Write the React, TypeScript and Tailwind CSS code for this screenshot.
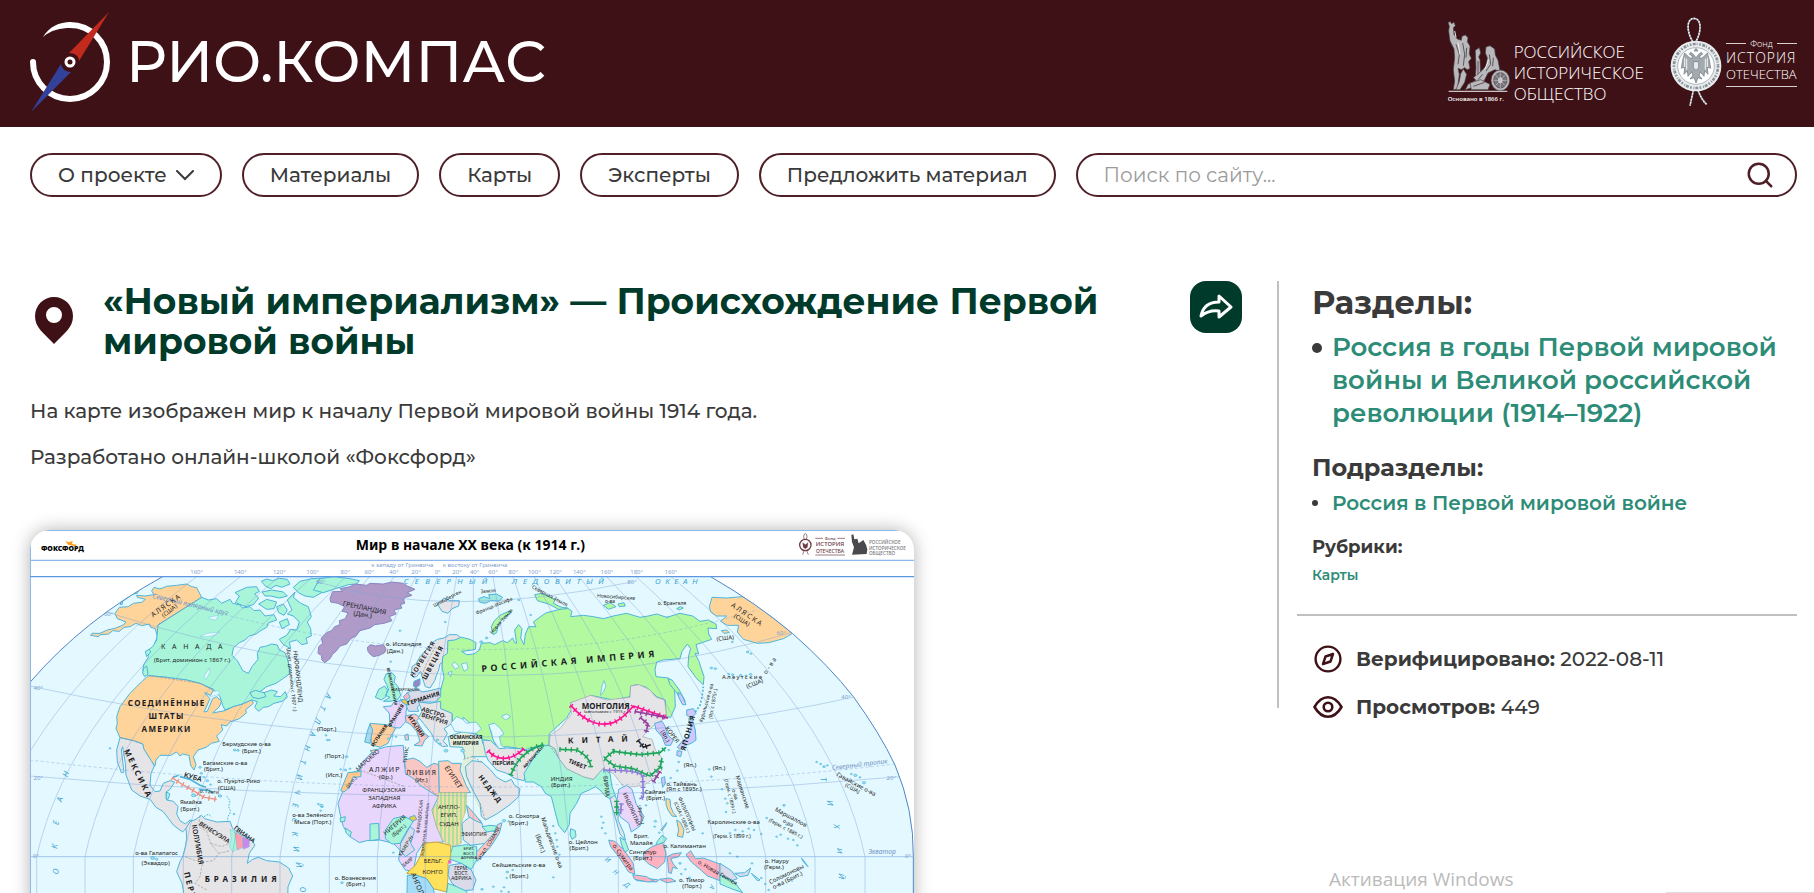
import React from 'react';
import { Search } from 'lucide-react';

// [x, y, text, size, rotation, weight, letter spacing]
type Label = [number, number, string, number?, number?, number?, number?];

const WATER = '#e3f9ff';
const COAST = '#4fb4dc';
const GRAY = '#e5e5e8';
const ORANGE = '#ffd59a';
const MINT = '#a8f5d9';
const LILAC = '#e8d6fc';
const ROSE = '#ffb3c0';

// Top edge and equator positions of every meridian.
const MERIDIANS = [
  [590, -40], [721, 110], [838, 255], [938, 400], [1037, 550], [1108, 695], [1182, 840], [1248, 988], [1313, 1132], [1370, 1276],
  [1420, 1420], [1479, 1565], [1539, 1710], [1602, 1855], [1665, 2000], [1737, 2150], [1820, 2297], [1908, 2445], [2013, 2595],
];

const westLabels: Label[] = [
  [502, 292, 'АЛЯСКА', 21, -35, 400, 4],
  [512, 307, '(США)', 18, -38],
  [585, 418, 'КАНАДА', 21, 0, 400, 20],
  [576, 455, '(Брит. доминион с 1867 г.)', 18],
  [500, 587, 'СОЕДИНЁННЫЕ', 24, 0, 700, 4],
  [500, 627, 'ШТАТЫ', 24, 0, 700, 4],
  [500, 667, 'АМЕРИКИ', 24, 0, 700, 4],
  [407, 795, 'МЕКСИКА', 24, 64, 700, 6],
  [888, 500, 'НЬЮФАУНДЛЕНД', 18, 84],
  [870, 510, '(Брит. доминион с 1907 г.)', 15, 84],
  [740, 709, 'Бермудские о-ва', 18],
  [754, 728, '(Брит.)', 18],
  [675, 764, 'Багамские о-ва', 18],
  [640, 783, '(Брит.)', 18],
  [577, 808, 'КУБА', 21, 16, 600],
  [716, 820, 'о. Пуэрто-Рико', 18],
  [680, 840, '(США)', 18],
  [628, 850, 'о. Гаити', 15, 4],
  [573, 883, 'Ямайка', 18],
  [570, 902, '(Брит.)', 18],
  [586, 1005, 'КОЛУМБИЯ', 21, 80, 600],
  [640, 972, 'ВЕНЕСУЭЛА', 18, 32, 600],
  [730, 978, 'ГВИАНА', 18, 36, 600],
  [728, 1115, 'БРАЗИЛИЯ', 24, 0, 700, 12],
  [562, 1130, 'ПЕРУ', 24, 75, 700, 6],
  [470, 1035, 'о-ва Галапагос', 18],
  [467, 1065, '(Эквадор)', 18],
  [938, 921, 'о-ва Зелёного', 18],
  [938, 941, 'Мыса (Порт.)', 18],
];

const middleLabels: Label[] = [
  [132, 300, 'ГРЕНЛАНДИЯ', 20, 12],
  [127, 320, '(Дан.)', 20, 8],
  [251, 409, 'о. Исландия', 18],
  [225, 429, '(Дан.)', 18],
  [384, 270, 'Шпицберген', 15, -28],
  [505, 248, 'Земля', 15, -4],
  [524, 292, 'Франца-Иосифа', 15, -22],
  [687, 262, 'Северная Земля', 15, 28],
  [548, 337, 'Новая Земля', 15, -48],
  [888, 266, 'Новосибирские', 15, 4],
  [870, 280, 'о-ва', 15],
  [750, 463, 'РОССИЙСКАЯ ИМПЕРИЯ', 27, -5, 700, 11],
  [314, 450, 'НОРВЕГИЯ', 19, -58, 600, 3],
  [345, 460, 'ШВЕЦИЯ', 20, -62, 700, 4],
  [212, 530, 'ВЕЛИКОБРИТАНИЯ', 12, 78, 600],
  [256, 543, 'НИДЕРЛАНДЫ', 12],
  [312, 571, 'ГЕРМАНИЯ', 18, -18, 700],
  [232, 620, 'ФРАНЦИЯ', 15, -58, 700],
  [283, 652, 'ИТАЛИЯ', 18, 56, 600],
  [182, 680, 'ИСПАНИЯ', 15, -56, 700],
  [340, 614, 'АВСТРО-', 18, 18, 600],
  [342, 632, 'ВЕНГРИЯ', 18, 18, 600],
  [438, 688, 'ОСМАНСКАЯ', 15, 0, 700],
  [437, 705, 'ИМПЕРИЯ', 15, 0, 700],
  [20, 664, '(Порт.)', 18],
  [43, 744, '(Порт.)', 18],
  [42, 802, '(Исп.)', 18],
  [147, 755, 'МАРОККО', 18, -42],
  [98, 820, '(Исп.)', 15, -50],
  [195, 787, 'АЛЖИР', 21, 0, 400, 4],
  [197, 808, '(Фр.)', 18],
  [263, 735, 'ТУНИС', 15, -82],
  [305, 796, 'ЛИВИЯ', 21, 0, 400, 4],
  [304, 816, '(Ит.)', 18],
  [394, 805, 'ЕГИПЕТ', 21, 56, 400],
  [192, 846, 'ФРАНЦУЗСКАЯ', 18],
  [193, 869, 'ЗАПАДНАЯ', 18],
  [193, 893, 'АФРИКА', 18],
  [387, 898, 'АНГЛО-', 18],
  [387, 922, 'ЕГИП.', 18],
  [387, 947, 'СУДАН', 18],
  [228, 950, 'НИГЕРИЯ', 18, -40],
  [240, 966, '(Брит.)', 16, -40],
  [304, 920, 'ФРАНЦУЗСКАЯ', 14, -84],
  [320, 960, 'ЭКВАТОРИАЛЬНАЯ АФРИКА', 12, -84],
  [262, 1010, 'КАМЕРУН', 15, -58],
  [266, 1060, 'ЗАИР', 15, -40],
  [462, 978, 'ЭФИОПИЯ', 15],
  [512, 1003, 'ИТАЛ. СОМАЛИ', 15, -58],
  [340, 1059, 'БЕЛЬГ.', 18],
  [338, 1091, 'КОНГО', 18],
  [447, 1020, 'БРИТ.', 12, 0, 400],
  [447, 1034, 'ВОСТ.', 12, 0, 400],
  [447, 1048, 'АФРИКА', 12, 0, 400],
  [424, 1080, 'ГЕРМ.', 15],
  [424, 1095, 'ВОСТ.', 15],
  [424, 1111, 'АФРИКА', 15],
  [288, 1130, 'АНГОЛА', 21, 68],
  [505, 842, 'НЕДЖД', 21, 52, 700, 4],
  [549, 765, 'ПЕРСИЯ', 16, 0, 700],
  [642, 745, 'АФГАНИСТАН', 12, -48, 700],
  [725, 812, 'ИНДИЯ', 18],
  [722, 831, '(Брит.)', 18],
  [770, 768, 'ТИБЕТ', 18, 22, 700],
  [857, 598, 'МОНГОЛИЯ', 24, 0, 700],
  [858, 610, '(автономия с 1915 г.)', 13],
  [846, 697, 'КИТАЙ', 24, -2, 700, 24],
  [853, 830, 'БИРМА', 18, 84],
  [930, 900, 'ИНДОКИТАЙ', 17, 66],
  [959, 915, '(Франц.)', 14, 78],
  [612, 925, 'о. Сокотра', 18],
  [596, 944, '(Брит.)', 18],
  [690, 1000, 'Мальдивские о-ва', 18, 70],
  [656, 1002, '(Брит.)', 18, 72],
  [790, 1002, 'о. Цейлон', 18],
  [777, 1020, '(Брит.)', 18],
  [596, 1070, 'Сейшельские о-ва', 18],
  [597, 1104, '(Брит.)', 18],
  [106, 1109, 'о. Вознесения', 18],
  [107, 1128, '(Брит.)', 18],
  [904, 1045, 'о. Суматра', 18, 54],
];

const eastLabels: Label[] = [
  [156, 284, 'о. Врангеля', 15],
  [378, 320, 'АЛЯСКА', 21, 34, 400, 5],
  [362, 335, '(США)', 18, 34],
  [316, 390, '(США)', 18, -6],
  [368, 508, 'Алеутские', 18, 0, 400, 4],
  [456, 468, 'о-ва', 18, -56, 400, 6],
  [406, 526, '(США)', 18, -22],
  [264, 580, 'Курильские о-ва', 15, -74],
  [284, 582, '(Яп. с 1875г.)', 15, -80],
  [211, 670, 'ЯПОНИЯ', 21, -74, 700, 3],
  [152, 678, 'КОРЕЯ', 18, 54],
  [130, 682, '(Яп.)', 18, 60],
  [210, 770, '(Яп.)', 18],
  [297, 780, '(Яп.)', 18],
  [185, 827, 'о. Тайвань', 18],
  [192, 844, '(Яп с 1895г.)', 18],
  [105, 852, 'Сайган', 18],
  [107, 869, '(Брит.)', 18],
  [196, 914, 'ФИЛИППИНЫ', 16, 66],
  [182, 924, '(США с 1898 г.)', 14, 66],
  [362, 848, 'Марианские', 17, 72],
  [340, 855, 'о-ва', 16, 72],
  [326, 860, '(Герм. с 1899 г.)', 14, 76],
  [341, 943, 'Каролинские о-ва', 18],
  [336, 985, '(Герм. с 1899 г.)', 15],
  [510, 927, 'Маршаллов', 18, 28],
  [502, 944, 'о-ва', 16, 28],
  [495, 960, '(Герм. с 1885 г.)', 15, 28],
  [706, 828, 'Гавайские о-ва', 18, 28],
  [695, 840, '(США)', 16, 28],
  [64, 985, 'Брит.', 18],
  [64, 1005, 'Малайя', 18],
  [68, 1032, 'Сингапур', 18],
  [68, 1050, '(Брит.)', 18],
  [194, 1015, 'о. Калимантан', 18],
  [290, 1093, 'о. Новая Гвинея', 17, 30],
  [470, 1060, 'о. Науру', 18],
  [462, 1078, '(Герм.)', 18],
  [502, 1098, 'Соломоновы', 18, -26],
  [505, 1116, 'о-ва (Брит.)', 18, -26],
  [215, 1117, 'о. Тимор', 18],
  [216, 1135, '(Порт.)', 18],
];

const oceanLabels: Label[] = [
  [1346, 223, 'СЕВЕРНЫЙ', 24, 0, 400, 19],
  [1682, 223, 'ЛЕДОВИТЫЙ', 24, 0, 400, 17],
  [2036, 223, 'ОКЕАН', 24, 0, 400, 14],
  [205, 795, 'Н', 24, -70], [187, 870, 'А', 24, -74], [176, 940, 'Е', 24, -78], [172, 1010, 'К', 24, -82], [176, 1085, 'О', 24, -84],
  [978, 555, 'А', 24, 118], [960, 590, 'Т', 24, 115], [946, 630, 'Л', 24, 112], [930, 670, 'А', 24, 108], [914, 712, 'Н', 24, 104],
  [900, 754, 'Т', 24, 102], [890, 800, 'И', 24, 98], [884, 845, 'Ч', 24, 96], [878, 885, 'Е', 24, 94], [876, 930, 'С', 24, 90],
  [876, 972, 'К', 24, 88], [880, 1018, 'И', 24, 86], [888, 1065, 'Й', 24, 84], [900, 1140, 'О', 24, 80],
  [2462, 810, 'Т', 24, 78], [2482, 880, 'И', 24, 84], [2502, 950, 'Х', 24, 86], [2512, 1022, 'И', 24, 90], [2516, 1098, 'Й', 24, 94],
  [1818, 1055, 'И', 21, 40], [1842, 1092, 'Н', 21, 40], [1876, 1130, 'Д', 21, 40], [2130, 1128, 'А', 21, 120],
];

const gridLabels: Label[] = [
  [590, 193, '160°'], [721, 193, '140°'], [838, 193, '120°'], [938, 193, '100°'], [1036, 193, '80°'], [1108, 193, '60°'], [1182, 193, '40°'],
  [1248, 193, '20°'], [1313, 193, '0°'], [1371, 193, '20°'], [1424, 193, '40°'], [1479, 193, '60°'], [1540, 193, '80°'], [1603, 193, '100°'],
  [1667, 193, '120°'], [1738, 193, '140°'], [1821, 193, '160°'], [1910, 193, '180°'], [2013, 193, '160°'],
  [1207, 170, 'к западу от Гринвича'], [1425, 170, 'к востоку от Гринвича'],
  [962, 223, '80°'], [1896, 223, '80°'], [326, 317, '60°'], [2344, 376, '60°'], [115, 541, '40°'], [2538, 568, '40°'],
  [115, 811, '20°'], [2674, 811, '20°'], [108, 1045, '0°'], [2724, 1044, '0°'],
];

function Labels({ items, color = '#1c1c22', italic = false }: { items: Label[]; color?: string; italic?: boolean }) {
  return (
    <g fill={color} textAnchor="middle" fontStyle={italic ? 'italic' : 'normal'}>
      {items.map(([x, y, text, size = 18, angle = 0, weight = 400, spacing = 0], i) => (
        <text key={i} x={x} y={y} fontSize={size} fontWeight={weight} letterSpacing={spacing} transform={`rotate(${angle} ${x} ${y})`}>
          {text}
        </text>
      ))}
    </g>
  );
}

// A front line: a stroke with short teeth on it.
function Front({ d, color }: { d: string; color: string }) {
  return (
    <g fill="none" stroke={color}>
      <path d={d} strokeWidth="5" />
      <path d={d} strokeWidth="15" strokeDasharray="4 13" />
    </g>
  );
}

function Islands({ points, color = '#9fe6ea' }: { points: number[][]; color?: string }) {
  return (
    <g fill={color} stroke={COAST} strokeWidth="2">
      {points.map(([x, y, r = 3], i) => (
        <ellipse key={i} cx={x} cy={y} rx={r} ry={Math.max(2, r * 0.7)} />
      ))}
    </g>
  );
}

const West = () => (
  <g strokeLinejoin="round" stroke={COAST} strokeWidth="3">
    <path fill="#b3f9a0" d="M360 283 372 262 390 246 405 236 417 238 412 250 398 252 385 262 368 274 366 284Z" />
    <path fill={ORANGE} d="M462 232 480 237 500 229 530 226 560 222 575 230 590 233 605 262 474 345 486 372 478 396 470 418 464 400 472 380 466 356 452 352 448 342 425 347 408 340 390 350 372 352 358 364 338 362 326 372 300 374 296 380 272 376 276 370 300 370 322 360 345 355 370 345 378 336 352 326 345 310 358 292 385 290 400 280 425 277 436 268 412 262 410 256 435 258 462 254 455 243Z" />
    <path fill={MINT} d="M605 262 625 270 650 266 665 280 690 268 698 280 720 285 728 294 750 290 762 302 780 300 795 318 822 314 830 330 806 338 800 352 782 362 768 372 748 378 735 390 718 398 700 414 696 436 712 452 722 470 728 482 745 490 756 470 774 448 772 430 780 412 800 408 815 402 832 405 838 420 855 428 862 446 868 470 868 492 850 505 828 520 800 530 780 545 772 560 792 548 815 540 832 545 822 558 842 560 856 545 862 562 846 574 822 580 805 590 790 592 776 604 764 592 772 575 755 570 725 583 700 590 675 600 668 586 660 560 640 538 600 520 560 510 500 502 445 497 428 482 432 462 446 440 440 424 458 410 470 390 474 345Z" />
    <path fill={MINT} d="M706 278 718 258 705 248 740 232 770 230 778 244 764 252 776 264 760 284 738 290ZM784 214 800 207 818 212 838 205 862 208 870 222 845 232 828 226 812 236 796 228ZM786 246 815 240 850 246 862 258 838 264 812 258 795 258ZM776 282 800 268 830 276 822 296 800 298ZM862 270 885 246 880 262 902 280 925 290 934 320 922 336 932 356 934 378 918 384 922 400 905 404 890 390 868 396 872 416 850 404 838 388 860 376 872 358 890 360 898 336 880 318 862 312 876 300ZM880 232 900 214 935 206 975 204 990 206 990 240 965 248 940 262 915 258 895 248ZM830 290 850 282 862 300 852 316 836 308ZM838 336 862 326 868 344 846 356Z" />
    <path fill={MINT} d="M750 548 766 541 792 548 798 560 775 566 758 562ZM436 424 448 418 452 426 440 440ZM430 476 440 468 444 492 434 500 428 490Z" />
    <path fill={WATER} d="M600 380 622 370 660 366 648 374 625 380ZM626 322 655 316 648 330 632 328ZM612 500 628 474 630 486 618 508ZM620 548 655 542 660 552 632 560Z" strokeWidth="1" />
    <path fill={ORANGE} d="M445 497 500 502 560 510 600 520 640 540 632 556 614 548 630 566 612 606 622 604 638 566 650 560 665 574 658 590 638 609 675 602 700 590 728 582 755 570 760 580 736 600 740 608 718 626 690 636 680 648 664 644 668 660 650 678 658 694 634 700 618 712 594 720 580 740 588 764 582 780 572 766 567 736 548 732 540 738 530 726 512 736 480 736 468 750 465 768 452 752 446 740 430 716 428 702 400 692 360 683 348 655 352 640 350 620 360 590 390 550 425 515Z" />
    <path fill={GRAY} d="M360 683 400 692 428 702 432 718 446 740 454 752 463 768 453 790 450 825 465 845 480 843 490 820 510 812 524 816 510 838 498 846 500 870 520 874 534 890 530 912 540 932 556 942 570 930 584 936 562 950 548 966 534 956 520 945 505 925 490 905 468 892 450 868 420 858 395 840 378 795 376 760 368 710 364 720 372 786 364 788 352 756 350 720Z" />
    <path fill={MINT} d="M500 846 510 852 504 868 498 866Z" />
    <path fill={GRAY} d="M558 955 570 935 588 928 604 916 614 926 650 936 690 934 698 956 725 975 750 985 765 1005 748 1030 742 1060 758 1048 775 1042 800 1052 838 1056 866 1074 878 1098 864 1130 862 1200 560 1200 546 1120 530 1085 540 1055 548 1040 556 1010 560 985Z" />
    <path fill={MINT} strokeWidth="1" d="M690 958 704 964 710 988 712 1016 698 1026 688 1008 694 984Z" />
    <path fill="#ff9dab" strokeWidth="1" d="M704 966 726 978 730 1012 712 1020Z" />
    <path fill="#c58bf0" strokeWidth="1" d="M728 980 748 988 748 1010 730 1018Z" />
    <g fill="none" stroke="#9a9a9a" strokeWidth="2" strokeDasharray="8 4">
      <path d="M600 916 596 950 620 964 632 1000 656 1030 640 1052 608 1056 600 1100 585 1120 620 1140M632 1000 665 1010 688 1000M656 1030 690 1022M556 1040 580 1050 608 1056M360 683 400 692 430 702M474 345 604 262M445 497 600 520 640 538" />
    </g>
    <g stroke="#f0907c">
      <path d="M516 803 545 822 580 842 612 862 650 868" strokeWidth="4" fill="none" />
      <path d="M516 803 545 822 580 842 612 862 650 868" strokeWidth="16" strokeDasharray="4 14" fill="none" />
    </g>
    <path fill="none" d="M540 800 570 808 600 826 618 832M520 802 536 796M596 838 630 842 640 850M578 852 588 858M655 856 664 858" strokeWidth="5" />
    <path fill="none" d="M680 858 690 872 686 890 692 905 684 920 682 938M612 920 626 912 634 922" strokeDasharray="5 4" />
    <Islands points={[[704, 720, 4], [714, 721, 4], [600, 772, 4], [604, 790, 4], [612, 802], [622, 812, 4], [632, 824], [702, 912], [330, 715], [458, 1044, 6], [470, 1048, 4], [580, 856, 6], [660, 858, 5], [955, 882], [966, 890, 4], [962, 902], [978, 676], [988, 690]]} />
  </g>
);

const Middle = () => (
  <g strokeLinejoin="round" stroke={COAST} strokeWidth="3">
    <path fill={MINT} d="M-20 240 0 206 40 200 90 206 118 212 110 222 85 224 60 232 40 238 10 248Z" />
    <path fill="#b09ac8" stroke="#8b86c4" d="M30 265 38 245 68 244 60 236 90 230 105 222 140 226 150 220 190 222 215 216 250 220 262 228 285 238 262 248 276 256 250 264 254 280 240 284 246 294 222 300 228 312 208 320 216 332 192 340 164 344 150 354 120 362 108 378 92 386 80 402 60 408 48 424 38 432 30 446 14 458 6 450 4 436 -6 430 -4 410 8 400 4 384 20 368 34 362 44 350 60 344 58 332 76 326 84 308 66 304 74 290 54 280 32 276Z" />
    <path fill="#b09ac8" stroke="#8b86c4" d="M142 412 152 404 166 408 190 404 198 416 194 428 178 436 160 440 150 432 144 424Z" />
    <path fill={GRAY} d="M274 492 276 470 288 462 300 440 318 420 334 400 352 388 372 384 388 374 410 374 424 384 404 392 384 392 384 420 380 450 360 462 356 480 350 494 344 512 330 534 316 530 308 506 302 484 290 500 280 502Z" />
    <path fill="#9a85c6" d="M282 514 300 506 300 524 288 534 280 528Z" />
    <path fill="#b3f9a0" d="M384 392 404 390 424 382 450 388 468 398 466 418 444 422 425 424 440 434 462 432 478 420 484 400 510 398 524 404 548 392 562 398 578 384 584 398 590 400 584 360 596 344 606 356 602 384 612 404 616 372 626 350 648 350 640 336 664 318 680 308 712 300 740 292 756 304 752 320 790 316 820 320 850 326 880 318 920 310 960 322 985 318 1010 312 1040 322 1080 310 1118 318 1140 334 1165 330 1188 342 1190 356 1164 354 1166 372 1175 388 1140 400 1128 404 1136 432 1125 430 1136 452 1152 500 1150 524 1130 506 1104 470 1106 436 1112 416 1102 402 1086 424 1080 446 1030 450 1010 456 1005 480 1008 500 1046 504 1064 540 1066 590 1052 622 1038 620 1036 570 1010 560 980 532 950 524 932 528 930 560 880 570 812 556 800 566 752 578 754 600 740 624 700 660 688 672 686 706 664 706 640 712 612 720 590 714 560 710 545 712 530 680 540 660 520 640 508 650 520 690 530 712 500 690 486 690 470 672 440 660 450 640 430 622 428 632 398 640 396 612 370 600 346 592 346 560 362 540 372 502 366 470 368 440 382 430Z" />
    <path fill={WATER} d="M506 644 524 640 540 654 552 672 538 680 544 706 560 716 538 718 520 690 514 666ZM545 618 560 612 572 620 556 630ZM842 552 846 528 852 512 858 528 850 546 842 556ZM396 464 404 456 418 470 406 478ZM424 462 440 458 444 476 432 484ZM384 488 396 484 392 500Z" strokeWidth="2" />
    <path fill="#b3f9a0" d="M514 350 522 334 540 316 570 302 574 308 552 322 534 344 530 368 520 374ZM644 254 665 250 690 262 706 268 700 280 720 290 742 296 716 298 686 282 652 272ZM850 286 870 278 888 290 866 298ZM894 282 912 278 916 288 898 290Z" />
    <path fill="#9fe8df" d="M476 266 492 260 510 266 506 254 530 252 548 262 538 274 512 272 496 280 478 276Z" />
    <path fill={GRAY} d="M352 282 372 264 390 272 418 272 416 288 396 296 384 310 366 304Z" />
    <path fill={MINT} d="M198 492 216 488 226 500 222 516 234 530 242 556 232 570 210 574 190 574 210 562 196 556 206 540 200 524 192 508ZM166 562 176 538 194 528 202 540 198 560 184 570Z" />
    <path fill={LILAC} d="M190 590 214 588 222 576 242 572 262 584 258 606 258 634 240 654 210 652 208 610Z" />
    <path fill="#d9dbea" d="M262 548 292 536 306 546 330 542 362 534 362 560 346 576 306 576 292 592 296 604 266 604 258 586 270 566Z" />
    <path fill={ROSE} d="M250 560 262 548 270 560 258 572Z" />
    <path fill="#f5c842" d="M242 568 260 570 264 586 250 580Z" />
    <path fill="#ffcf9e" d="M150 640 200 644 228 654 214 676 204 700 180 712 154 704Z" />
    <path fill="#a7d9ee" d="M150 642 158 660 150 700 134 696 142 664Z" />
    <path fill="#f8c6c4" d="M256 618 284 612 300 622 290 632 312 668 326 680 314 690 306 708 282 706 300 694 290 664 270 642 258 636ZM254 676 264 672 266 690 256 690Z" />
    <path fill={GRAY} d="M296 576 330 580 362 574 362 596 396 610 396 640 372 656 382 670 370 694 384 708 368 710 344 692 334 670 310 640 296 622 306 604Z" />
    <path fill="#e0eedb" d="M384 680 390 710 428 712 436 752 452 752 456 740 510 740 510 716 488 700 484 678 456 670 430 664Z" />
    <path fill="#e0eedb" d="M430 748 456 740 480 800 500 870 490 920 470 880 438 810 424 780Z" stroke="none" />
    <path fill={GRAY} d="M440 800 436 770 456 752 486 756 512 780 530 802 556 816 574 808 584 826 600 836 596 860 570 884 530 912 496 930 484 918 480 880 458 840Z" />
    <path fill={GRAY} d="M488 690 512 692 538 716 560 714 600 716 622 722 648 712 664 708 648 730 640 760 622 784 612 812 586 806 560 790 530 780 504 750 496 730Z" />
    <path fill={MINT} d="M612 790 650 730 660 708 690 706 704 716 716 744 740 776 790 800 820 808 836 790 848 776 870 790 876 830 886 856 880 870 858 860 840 840 826 830 812 838 784 850 770 880 750 910 748 944 734 968 716 946 704 900 694 860 676 850 664 830 640 816 616 816ZM752 956 766 962 768 980 756 988 750 974Z" />
    <path fill={GRAY} stroke="#a5a5a5" strokeWidth="2" d="M752 578 812 556 860 570 930 562 932 528 958 524 990 540 1008 562 1034 570 1040 622 1010 640 984 660 968 680 996 688 1006 720 1024 742 1026 780 1000 806 972 826 940 830 912 832 880 790 848 776 820 808 790 800 740 776 716 744 706 716 688 706 690 676 720 656 754 612Z" />
    <path fill={LILAC} d="M62 920 54 880 70 840 90 790 120 780 124 760 160 722 200 710 250 706 254 770 290 810 356 860 336 900 350 950 370 996 310 1000 290 1030 280 1084 256 1080 236 1050 240 1020 220 1000 180 990 140 992 118 998 90 980 70 950Z" />
    <path fill={MINT} d="M150 942 176 940 178 988 150 992ZM76 954 94 966 90 980 78 968ZM196 960 220 926 252 918 280 934 262 960 240 1000 216 1002 196 986ZM60 924 76 920 74 934 62 936Z" />
    <path fill="#d9dbea" d="M242 1000 270 950 284 960 272 1000 284 1020 256 1040 240 1020Z" />
    <path fill="#ffc98d" d="M62 842 84 788 124 784 122 800 98 802 90 830 72 846ZM150 722 170 718 160 730Z" />
    <path fill="#f8c6c4" d="M254 750 280 744 300 754 320 772 342 760 356 764 358 862 300 826 290 812 256 790Z" />
    <path fill="#ffcdb8" d="M356 754 384 752 396 760 424 760 420 780 440 830 452 848 358 848Z" />
    <path fill="url(#sudan)" stroke="#c9b98a" strokeWidth="2" d="M356 848 440 848 438 900 424 940 424 1000 396 1010 370 994 350 950 336 900 352 880Z" />
    <path fill={GRAY} d="M426 940 450 920 480 930 490 950 526 966 496 1000 452 1006 430 990Z" />
    <path fill="#f8c6c4" d="M440 886 462 910 486 940 470 934 446 920ZM494 1000 526 966 532 944 546 938 538 970 512 1010 472 1054 466 1030Z" />
    <path fill={MINT} d="M486 950 510 946 530 948 524 962 500 966ZM398 1010 440 1004 470 1010 470 1050 454 1078 424 1060 386 1046Z" />
    <path fill="#ffe15c" stroke="#c9a83c" d="M312 1000 350 996 392 1006 392 1040 384 1060 384 1100 380 1146 340 1136 320 1106 290 1096 260 1090 286 1066 300 1040Z" />
    <path fill="#d9dbea" d="M388 1066 424 1060 454 1080 468 1110 458 1140 424 1142 396 1120 384 1096Z" />
    <path fill="#a5dcf8" d="M262 1096 290 1096 320 1106 340 1136 352 1200 260 1200Z" />
    <path fill={MINT} d="M384 1120 410 1130 440 1144 450 1200 372 1200Z" />
    <path fill="#f5c842" d="M268 922 284 916 290 928 276 934Z" />
    <path fill="#e36ad0" stroke="none" d="M384 1052 394 1050 394 1060 386 1062Z" />
    <path fill={GRAY} d="M870 866 884 856 896 880 894 930 912 970 916 990 900 972 888 930 876 890Z" />
    <path fill={LILAC} d="M896 838 920 826 936 838 948 880 972 920 960 948 934 966 926 940 900 920 890 876Z" />
    <path fill={ROSE} d="M866 990 884 994 912 1020 940 1060 944 1092 926 1086 896 1040 872 1010ZM940 1100 970 1104 1016 1110 1010 1116 950 1112Z" />
    <path fill={MINT} d="M900 982 916 992 926 1020 914 1026 904 1002Z" />
    <g fill="none" stroke="#909090" strokeWidth="2" strokeDasharray="7 4">
      <path d="M346 410 320 460 304 500M254 770 356 860M120 780 254 830M430 748 456 740 486 756M688 706 716 744M480 880 496 930" />
    </g>
    <g fill={WATER} stroke={COAST} strokeWidth="2">
      <path d="M392 640 410 620 428 628 440 640 468 636 484 656 468 670 440 668 404 664Z" />
    </g>
    <Front d="M504 722C530 752 570 756 612 716" color="#ff1493" />
    <Front d="M572 796C585 760 610 720 670 704" color="#1ca65a" />
    <Front d="M752 586C800 640 840 650 880 638 910 625 930 600 940 588L1044 624" color="#ff1493" />
    <Front d="M718 718 770 720C800 735 812 750 812 772" color="#1ca65a" />
    <Front d="M854 746 880 724 960 734 1020 728 1038 712M854 746 884 768 940 776 990 798 1020 772 1026 744" color="#1ca65a" />
    <Front d="M850 780C900 782 960 780 968 800L970 862 958 866M904 880 902 912" color="#8d7fd6" />
    <Front d="M890 872 890 916" color="#1ca65a" />
    <Front d="M944 604 984 612 1044 624M960 622 984 642 978 668M1000 816 1020 784" color="#9440a0" />
    <Front d="M954 690 970 712 992 704" color="#222" />
    <Islands points={[[212, 455], [240, 362], [376, 336], [596, 270], [632, 315], [484, 396, 5], [500, 384, 4], [206, 686, 4], [216, 678, 4], [228, 680], [352, 690, 4], [360, 702, 4], [378, 722, 6], [428, 722, 6], [22, 690], [80, 740, 4], [62, 778, 3], [76, 780, 4], [90, 776], [4, 886, 5], [220, 1028], [552, 932, 5], [566, 934, 3], [700, 948], [706, 970], [710, 990], [712, 1010], [718, 1034], [562, 1086, 4], [578, 1080], [560, 1104], [700, 1102], [486, 1138, 4], [520, 1130], [544, 1144], [552, 1132], [566, 1146], [844, 920], [850, 938], [846, 954], [856, 970], [66, 1118, 4]]} />
  </g>
);

const East = () => (
  <g strokeLinejoin="round" stroke={COAST} strokeWidth="3">
    <path fill={ORANGE} d="M268 290 276 262 320 264 368 260 410 286 470 332 518 370 490 386 446 398 412 400 370 388 352 366 356 346 322 346 302 334 320 318 290 318 272 306Z" />
    <path fill={ORANGE} d="M304 362 320 360 328 368 312 370Z" />
    <path fill="#b3f9a0" d="M170 296 182 290 190 294 178 300ZM144 506 156 510 178 540 196 574 188 582 170 548 150 524Z" />
    <path fill="#cfc8fb" d="M174 546 186 556 198 584 188 584 176 562ZM200 600 220 596 228 610 214 624 200 616ZM206 626 218 632 226 660 228 690 214 700 196 706 180 718 172 712 186 694 204 682 214 660ZM172 722 186 724 182 740 170 736ZM104 640 126 634 136 650 144 676 160 690 152 706 136 706 126 680 108 660Z" />
    <path fill="#cfc8fb" d="M124 804 134 800 136 820 128 832Z" />
    <path fill="none" d="M226 606 240 586 246 560 250 530" strokeDasharray="6 5" strokeWidth="5" />
    <path fill={ORANGE} d="M138 866 150 868 152 890 160 908 170 920 156 918 144 900 138 884ZM170 930 182 938 192 960 188 982 172 978 176 960ZM122 960 140 938 136 948 126 962Z" />
    <path fill={MINT} d="M112 994 126 976 140 986 128 1000 104 1014Z" />
    <path fill={ROSE} d="M70 1028 96 1010 128 998 138 1030 134 1056 112 1076 86 1062 72 1048ZM142 1040 158 1032 184 1028 176 1040 152 1046 160 1062 172 1076 158 1072 154 1090 146 1088ZM38 1094 80 1100 102 1114 84 1116 44 1108ZM198 1034 212 1022 226 1046 250 1044 300 1062 300 1112 262 1098 238 1076 214 1056ZM118 1108 150 1104 168 1114 140 1118Z" />
    <path fill="#d9dbea" d="M300 1060 334 1082 352 1106 336 1112 300 1094Z" />
    <path fill={MINT} d="M300 1096 340 1112 360 1138 368 1148 334 1136 300 1122Z" />
    <path fill="#d9dbea" d="M344 1090 374 1088 392 1074 384 1096 360 1100Z" />
    <path fill="#bfe9f0" d="M544 1044 552 1052 564 1070 552 1058ZM394 1090 420 1110 412 1112Z" />
    <Islands points={[[142, 322], [383, 426, 4], [393, 431], [274, 474, 4], [286, 476, 4], [326, 492], [338, 494, 4], [362, 496, 4], [378, 497, 3], [392, 493, 4], [337, 396], [146, 720, 3], [176, 756], [172, 782], [268, 778], [274, 800], [306, 838], [316, 866], [322, 880], [318, 906], [590, 756], [602, 762], [612, 770, 4], [622, 766], [694, 792, 3], [706, 796, 5], [720, 802, 3], [732, 818, 5], [78, 886], [106, 934, 4], [104, 950], [118, 968], [152, 804], [210, 940], [248, 970], [330, 970], [346, 960], [356, 974], [368, 964], [386, 956], [402, 960], [424, 972], [440, 924], [470, 980], [482, 974], [492, 886, 4], [500, 944], [504, 986], [520, 990], [532, 1006], [180, 1060, 4], [196, 1078], [184, 1092], [208, 1104, 4], [330, 1030], [352, 1040], [396, 1060], [424, 1104], [436, 1122], [446, 1140]]} />
  </g>
);

const WorldMap = () => (
  <svg
    viewBox="90 60 2652 1140"
    className="block w-full max-w-[884px] rounded-t-[20px] bg-white shadow-[0_0_18px_rgba(0,0,0,0.3)]"
    fontFamily="'Noto Sans', sans-serif"
    role="img"
    aria-label="Мир в начале XX века (к 1914 г.)"
  >
    <defs>
      <clipPath id="globe">
        <path d="M488 200H2132Q2270 280 2377 370Q2490 470 2560 560Q2640 670 2685 765Q2742 900 2740 1040V1210H-100V760L90 517Q250 330 488 200Z" />
      </clipPath>
      <pattern id="sudan" width="12" height="12" patternUnits="userSpaceOnUse">
        <rect width="12" height="12" fill="#f0dfa8" />
        <rect width="6" height="12" fill="#aee09a" />
      </pattern>
    </defs>
    <g clipPath="url(#globe)">
      <rect x="-100" y="200" width="2900" height="1020" fill={WATER} />
      <West />
      <g transform="translate(960 0)"><Middle /></g>
      <g transform="translate(1860 0)"><East /></g>
      <g fill="none" stroke="#7fa3d6" strokeWidth="2" opacity="0.65">
        {MERIDIANS.map(([top, eq]) => (
          <path key={eq} d={`M${top} 200Q${eq + (top - eq) * 0.16} 600 ${eq} 1040V1200`} />
        ))}
        <path d="M-20 1040H2742" stroke="#4f8ad0" />
        <path d="M90 798Q1420 916 2700 800M90 528Q1420 820 2590 555M300 300Q1420 660 2400 360M950 215Q1330 335 1900 215" />
        <path d="M90 750Q1420 906 2690 762M460 250Q1400 560 2270 300" strokeDasharray="9 7" />
      </g>
    </g>
    <path d="M488 200Q250 330 90 517M2132 200Q2270 280 2377 370Q2490 470 2560 560Q2640 670 2685 765Q2742 900 2740 1040V1200" fill="none" stroke="#4f86c8" strokeWidth="3" />
    <path d="M90 61H2742M90 151H2742M91 60V1200" stroke="#8cb9ec" strokeWidth="4" fill="none" />
    <path d="M90 200H2742" stroke="#5c97e0" strokeWidth="4" />
    <Labels items={gridLabels} color="#7f9fce" />
    <Labels items={oceanLabels} color="#3da3d2" italic />
    <Labels items={[[570, 290, 'Северный полярный круг', 20, 13], [2580, 770, 'Северный тропик', 20, -7], [2646, 1032, 'Экватор', 20]]} color="#7493c4" italic />
    <Labels items={westLabels} />
    <g transform="translate(960 0)"><Labels items={middleLabels} /></g>
    <g transform="translate(1860 0)"><Labels items={eastLabels} /></g>
    <text x="1411" y="121" fontSize="42" fontWeight="700" textAnchor="middle">Мир в начале XX века (к 1914 г.)</text>

    <text x="187" y="122" fontSize="21" fontWeight="900" textAnchor="middle">ФОКСФОРД</text>
    <path d="M196 92 206 97 218 93 216 102 230 104 226 109 204 104Z" fill="#ff9c1a" />

    <g fill="none" stroke="#6d3a44">
      <ellipse cx="2416" cy="80" rx="5" ry="9" strokeWidth="2" />
      <circle cx="2416" cy="105" r="17" strokeWidth="4" />
      <path d="M2446 85H2469M2512 85H2535M2446 135H2535M2412 122 2408 134M2420 122 2425 134" strokeWidth="2" />
      <path d="M2408 98 2416 104 2424 98 2422 112 2416 116 2410 112Z" fill="#6d3a44" />
    </g>
    <g fill="#6d3a44" textAnchor="middle">
      <text x="2490" y="89" fontSize="12">Фонд</text>
      <text x="2490" y="108" fontSize="18">ИСТОРИЯ</text>
      <text x="2490" y="128" fontSize="15">ОТЕЧЕСТВА</text>
    </g>
    <path d="M2554 75 2560 73 2563 88 2572 86 2576 100 2590 90 2598 104 2602 118 2600 132 2556 134 2562 112 2556 96Z" fill="#4a4a4e" />
    <g fill="#77777c" fontSize="14">
      <text x="2607" y="103">РОССИЙСКОЕ</text>
      <text x="2607" y="119">ИСТОРИЧЕСКОЕ</text>
      <text x="2607" y="136">ОБЩЕСТВО</text>
    </g>
  </svg>
);

const CompassLogo = () => (
  <svg width="84" height="102" viewBox="0 0 84 102" fill="none" aria-hidden="true">
    <path d="M4 51A37 37 0 1 0 41 14" stroke="#fff" strokeWidth="6" strokeLinecap="round" />
    <path d="M42 11C30 11 20 16 14 26 22 19 31 17 42 17Z" fill="#fff" />
    <circle cx="41" cy="51" r="9" fill="#3e1117" />
    <path d="M80 1 40 42C46 42 50 45 50 50Z" fill="#c12a1c" />
    <path d="M2 101 32 53C33 58 37 61 42 61Z" fill="#32429a" />
    <circle cx="41" cy="51" r="4" stroke="#fff" strokeWidth="3" />
  </svg>
);

const Monument = () => (
  <svg width="62" height="71" viewBox="0 0 186 213" aria-hidden="true">
    <g fill="#b9b9bc" stroke="#4a4145" strokeWidth="2" strokeLinejoin="round">
      <path d="M0 4 8 2 10 8 18 4 22 14 16 20 18 40 28 54 40 58 42 46 52 42 60 50 58 62 66 76 64 100 70 112 62 122 66 142 58 146 50 140 40 146 30 142 34 160 28 204 16 206 20 180 16 146 20 110 18 84 6 60 2 30 4 16Z" />
      <path d="M46 144 56 160 50 184 36 206 24 206 34 180 38 158Z" />
      <path d="M82 88 94 80 98 96 92 108 96 116 98 176 82 170 84 140Z" />
      <path d="M114 78 126 74 140 84 142 102 150 118 156 150 140 146 120 156 108 180 90 190 66 202 52 206 60 190 84 178 76 170 98 152 114 136 118 110 112 96Z" />
      <path d="M66 186 98 176 126 190 120 206 70 206Z" />
      <ellipse cx="157" cy="178" rx="28" ry="31" />
      <ellipse cx="157" cy="178" rx="20" ry="23" fill="#77757a" />
      <ellipse cx="157" cy="178" rx="9" ry="11" fill="#c6c6ca" />
      <path d="M137 178H177M157 155V201M143 162 171 194M171 162 143 194" stroke="#c6c6ca" />
    </g>
    <path d="M24 70 34 100 30 130M44 66 50 100 46 134M56 80 54 110M124 100 128 130 114 150M136 110 134 136M90 120V160M104 160 90 176M76 196 110 184" stroke="#5a5458" strokeWidth="3" fill="none" />
    <path d="M30 64 36 100M122 116 110 146M20 30 24 48" stroke="#eee" strokeWidth="3" fill="none" />
    <path d="M2 211H178" stroke="#c9c3c4" strokeWidth="4" />
  </svg>
);

const Seal = () => (
  <svg width="52" height="90" viewBox="0 0 156 270" fill="none" aria-hidden="true">
    <g stroke="#9fb0b8" strokeWidth="5">
      <path d="M68 74C50 44 48 6 72 4 96 6 94 44 78 74" />
      <path d="M70 220 60 266M84 220C92 240 98 252 110 262" />
    </g>
    <g stroke="#fff" strokeWidth="4" strokeDasharray="4 5">
      <path d="M68 74C50 44 48 6 72 4 96 6 94 44 78 74" />
      <path d="M70 220 60 266M84 220C92 240 98 252 110 262" />
    </g>
    <circle cx="78" cy="147" r="76" fill="#e9edef" />
    <circle cx="78" cy="147" r="66" stroke="#8b949a" strokeWidth="8" strokeDasharray="5 4 9 3 3 5" />
    <circle cx="78" cy="147" r="55" fill="#fff" stroke="#8b959b" strokeWidth="2" />
    <g fill="#a3abb0" stroke="#6c757b" strokeWidth="2">
      <path d="M78 122 70 112 62 106 58 112 66 116 66 126 56 120 44 108 38 128 34 154 44 150 42 172 52 162 54 178 66 164 68 176 60 186 72 182 78 198 84 182 96 186 88 176 90 164 102 178 104 162 114 172 112 150 122 154 118 128 112 108 100 120 90 126 90 116 98 112 94 106 86 112Z" />
      <path d="M70 134H86V152L78 160 70 152Z" fill="#e6eaec" />
      <path d="M72 102 78 94 84 102Z" />
    </g>
    <path d="M44 122V150M50 126V158M112 122V150M106 126V158" stroke="#f2f4f5" strokeWidth="3" />
  </svg>
);

const pill = 'h-11 shrink-0 rounded-full border-2 border-[#4f1f27] px-[26px] flex items-center';
const navLinks = ['Материалы', 'Карты', 'Эксперты', 'Предложить материал'];

function Header() {
  return (
    <header className="flex h-[127px] items-center justify-between bg-[#3e1117] pr-[17px] pb-[3px] pl-[29px] text-white">
      <a href="#home" className="flex items-center gap-[13px]">
        <CompassLogo />
        <span className="text-[57px] leading-[64px]">РИО.КОМПАС</span>
      </a>
      <div className="flex items-center gap-[26px]">
        <a href="#rio" className="flex items-end gap-1 font-['Open_Sans',sans-serif]">
          <span className="flex w-[62px] flex-col">
            <Monument />
            <span className="h-3 text-[6px] leading-[14px] font-semibold whitespace-nowrap">Основано в 1866 г.</span>
          </span>
          <span className="text-[17px] leading-[21px] font-light">
            РОССИЙСКОЕ<br />ИСТОРИЧЕСКОЕ<br />ОБЩЕСТВО
          </span>
        </a>
        <a href="#fond" className="flex items-center gap-1 font-['Open_Sans',sans-serif] font-light">
          <Seal />
          <span className="flex w-[71px] flex-col">
            <span className="flex items-center gap-1 text-[9px] leading-3 before:h-px before:flex-1 before:bg-white/80 after:h-px after:flex-1 after:bg-white/80">
              Фонд
            </span>
            <span className="text-[14px] leading-4 tracking-[1px]">ИСТОРИЯ</span>
            <span className="border-b border-white/80 pb-1 text-[13px] leading-4">ОТЕЧЕСТВА</span>
          </span>
        </a>
      </div>
    </header>
  );
}

function Navigation() {
  return (
    <nav className="flex gap-5 pt-[26px] pr-[17px] pl-[30px] text-[20px]">
      <button type="button" className={`${pill} gap-[9px]`}>
        О проекте
        <svg width="18" height="11" viewBox="0 0 18 11" fill="none" stroke="currentColor" strokeWidth="2" strokeLinecap="round" aria-hidden="true">
          <path d="M1 1 9 9 17 1" />
        </svg>
      </button>
      {navLinks.map((title) => (
        <a key={title} href="#section" className={pill}>
          {title}
        </a>
      ))}
      <form className="flex h-11 min-w-0 flex-1 items-center rounded-full border-2 border-[#4f1f27] pr-[20px] pl-[26px]">
        <input
          type="search"
          aria-label="Поиск по сайту"
          placeholder="Поиск по сайту..."
          className="min-w-0 flex-1 bg-transparent font-normal outline-none placeholder:text-[#9b9b9b]"
        />
        <button type="submit" aria-label="Найти" className="text-[#4f1f27]">
          <Search size={30} strokeWidth={2} />
        </button>
      </form>
    </nav>
  );
}

function Article() {
  return (
    <article className="min-w-0">
      <div className="flex items-start">
        <svg width="38" height="48" viewBox="0 0 38 48" className="mt-4 ml-[5px] shrink-0" aria-hidden="true">
          <path fillRule="evenodd" fill="#3e1117" d="M19 0A19 19 0 0 0 0 19C0 31 9 36 19 47 29 36 38 31 38 19A19 19 0 0 0 19 0ZM19 10A8 8 0 1 1 19 26 8 8 0 0 1 19 10Z" />
        </svg>
        <h1 className="ml-[30px] flex-1 pr-16 text-[36px] leading-10 font-bold text-[#003a2b]">
          «Новый империализм» — Происхождение Первой мировой войны
        </h1>
        <button type="button" aria-label="Поделиться" className="flex size-[52px] shrink-0 items-center justify-center rounded-2xl bg-[#003a2b]">
          <svg width="34" height="26" viewBox="0 0 34 26" fill="none" stroke="#fff" strokeWidth="3" strokeLinejoin="round" aria-hidden="true">
            <path d="M20 2 32 13 20 23V17C12 16 7 18 2 22 4 12 10 8 20 8Z" />
          </svg>
        </button>
      </div>
      <p className="mt-9 text-[20px] leading-7">На карте изображен мир к началу Первой мировой войны 1914 года.</p>
      <p className="mt-[18px] mb-[59px] text-[20px] leading-7">Разработано онлайн-школой «Фоксфорд»</p>
      <WorldMap />
    </article>
  );
}

function Sidebar() {
  return (
    <aside className="h-[427px] border-l-2 border-[#c0c0c0] pl-[18px]">
      <div className="border-b-2 border-[#c0c0c0] pb-[29px] pl-[15px]">
        <h2 className="pt-1 text-[32px] leading-9 font-bold">Разделы:</h2>
        <ul className="mt-[10px] text-[26px] leading-[33px] font-semibold text-[#2d8c77]">
          <li className="flex gap-[10px]">
            <span className="mt-[12px] size-[10px] shrink-0 rounded-full bg-[#3a3a3a]" />
            <a href="#section">Россия в годы Первой мировой войны и Великой российской революции (1914–1922)</a>
          </li>
        </ul>
        <h3 className="mt-6 text-[24px] leading-7 font-bold">Подразделы:</h3>
        <ul className="mt-[7px] text-[20px] leading-7 font-semibold text-[#2d8c77]">
          <li className="flex items-center gap-[14px]">
            <span className="size-[6px] rounded-full bg-[#3a3a3a]" />
            <a href="#subsection">Россия в Первой мировой войне</a>
          </li>
        </ul>
        <h4 className="mt-[18px] text-[18px] leading-6 font-bold">Рубрики:</h4>
        <a href="#maps" className="mt-[6px] block text-[14px] leading-5 font-semibold text-[#2d8c77]">Карты</a>
      </div>
      <ul className="flex flex-col gap-5 pt-[29px] pl-4 text-[20px] leading-7">
        <li className="flex items-center gap-[13px]">
          <svg width="30" height="28" viewBox="0 0 30 28" fill="none" stroke="#3e1117" strokeWidth="2.4" strokeLinejoin="round" aria-hidden="true">
            <circle cx="15" cy="14" r="12.4" />
            <path d="M20 9 17.5 16.5 10 19 12.5 11.5Z" />
          </svg>
          <span><b>Верифицировано:</b> 2022-08-11</span>
        </li>
        <li className="flex items-center gap-[13px]">
          <svg width="30" height="28" viewBox="0 0 30 28" fill="none" stroke="#3e1117" strokeWidth="2.6" aria-hidden="true">
            <path d="M1.500 14C5 8 10 4.300 15 4.300S25 8 28.500 14C25 20 20 23.700 15 23.700S5 20 1.500 14Z" strokeLinejoin="round" />
            <circle cx="15" cy="14" r="4.300" />
          </svg>
          <span><b>Просмотров:</b> 449</span>
        </li>
      </ul>
    </aside>
  );
}

export default function App() {
  return (
    <div className="relative h-screen overflow-hidden bg-white font-['Montserrat','Inter',sans-serif] font-medium text-[#3a3a3a]">
      <Header />
      <Navigation />
      <main className="grid grid-cols-[minmax(0,1fr)_520px] gap-[35px] pt-[84px] pr-[17px] pl-[30px]">
        <Article />
        <Sidebar />
      </main>
      <div className="absolute right-0 bottom-0 w-[485px] font-['Open_Sans',sans-serif] text-[19px] leading-[26px] font-normal text-[#bbbbbb]">
        Активация Windows
        <div className="ml-auto h-px w-[148px] bg-[#dddddd]" />
      </div>
    </div>
  );
}
